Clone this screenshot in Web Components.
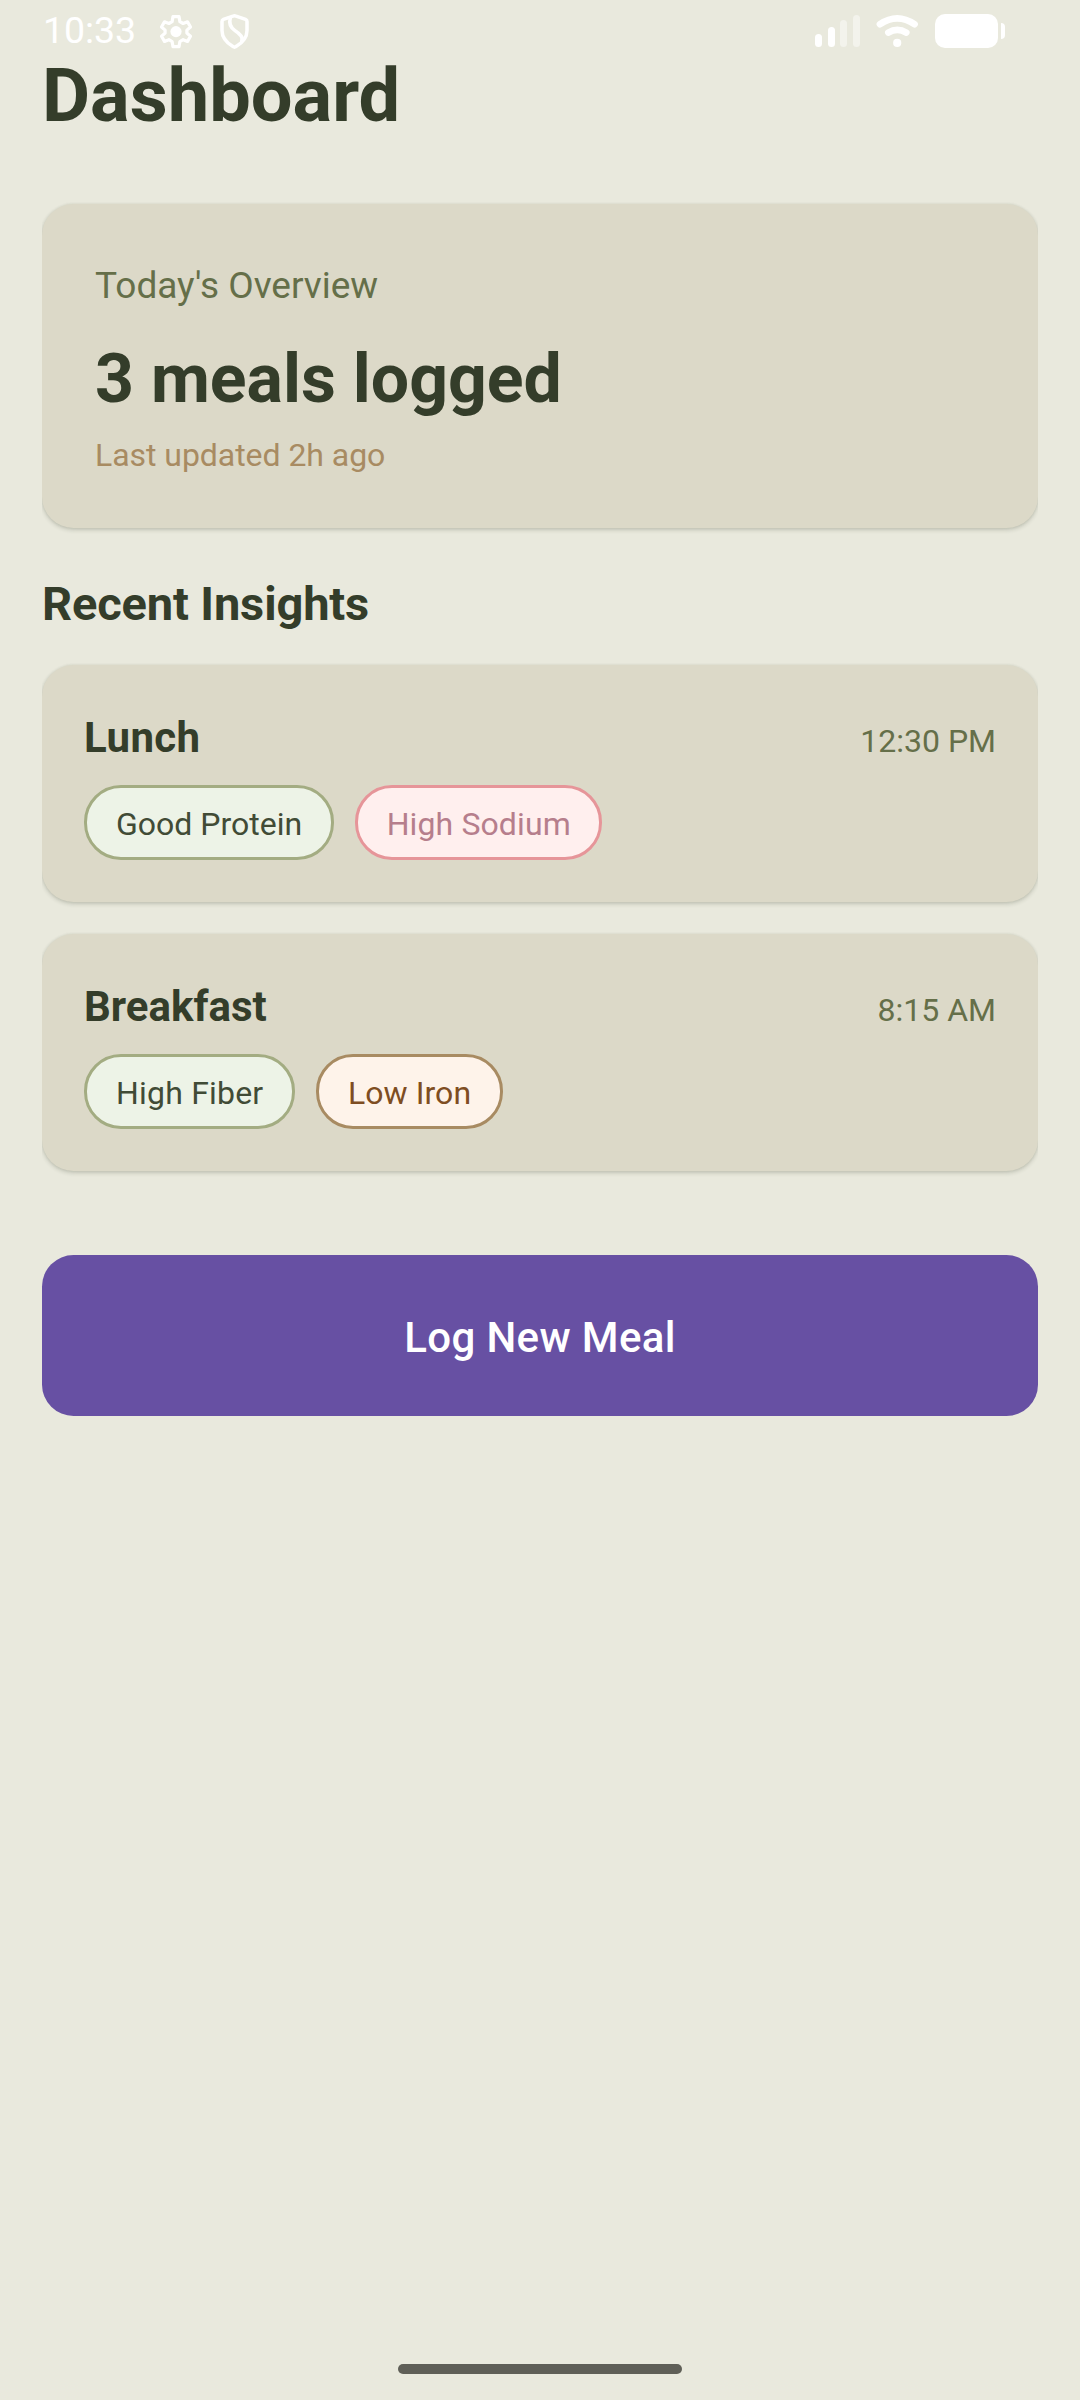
<!DOCTYPE html>
<html lang="en">
<head>
<meta charset="utf-8">
<title>Dashboard</title>
<style>
  html, body { margin: 0; background: #e9e9dd; }
  body { font-family: Roboto, sans-serif; color: #343d2a; height: 2400px; overflow: hidden; }
</style>
</head>
<body>
<meal-dashboard></meal-dashboard>
<script>
const define = (name, html) => {
  const t = document.createElement('template');
  t.innerHTML = html;
  customElements.define(name, class extends HTMLElement {
    constructor() {
      super();
      this.attachShadow({ mode: 'open' }).append(t.content.cloneNode(true));
    }
  });
};

define('status-bar', `
<style>
  :host { display: flex; position: absolute; top: 0; left: 0; width: 1080px; height: 62px; box-sizing: border-box; color: #fff; justify-content: space-between; padding: 8px 74px 0 43px; }
  .side { display: flex; align-items: flex-start; }
  .time { font-size: 37.5px; line-height: 44px; width: 94px; white-space: nowrap; letter-spacing: -.1px; }
  svg { display: block; }
  .gear { margin: 6px 0 0 22px; }
  .shield { margin: 5px 0 0 26px; }
  .signal { margin-top: 6px; }
  .wifi { margin: 6px 0 0 15px; }
  .battery { margin: 6px 0 0 15px; }
</style>
<div class="side">
  <span class="time">10:33</span>
  <svg class="gear" width="34" height="35" viewBox="0 0 34 35" fill="none" stroke="#fff" stroke-width="3.2" stroke-linejoin="round">
    <path d="M14 2.600h6l.9 5 3.200 1.900 4.400-1.700 3 5.200-3.600 3.100v3l3.600 3.100-3 5.200-4.400-1.700-3.200 1.900-.9 5h-6l-.9-5-3.200-1.900-4.400 1.700-3-5.200 3.600-3.100v-3l-3.600-3.100 3-5.200 4.400 1.700 3.200-1.900z"/>
    <circle cx="17" cy="17.6" r="5.6" fill="#fff" stroke="none"/>
  </svg>
  <svg class="shield" width="31" height="37" viewBox="0 0 31 37" fill="none" stroke="#fff" stroke-width="3.5" stroke-linejoin="round" stroke-linecap="round">
    <path d="M14 3.100Q15.500 2.500 17 3.100L26.600 6.400Q28 7 28 8.500V17.500C28 25 23 30 17 33.600Q15.500 34.600 14 33.600C8 30 3 25 3 17.500V8.500Q3 7 4.400 6.400Z"/>
    <path d="M11.400 4.800C9.600 10.500 11 14.200 16 17.600C21.500 21.200 24.300 24 22.700 28.200"/>
  </svg>
</div>
<div class="side">
  <svg class="signal" width="46" height="34" viewBox="0 0 46 34" fill="#fff">
    <rect x="0" y="20" width="7" height="13" rx="3.5"/>
    <rect x="13" y="13" width="7" height="20" rx="3.5"/>
    <rect x="25" y="6" width="7" height="27" rx="3.5" opacity=".45"/>
    <rect x="38" y="1" width="7" height="32" rx="3.5" opacity=".45"/>
  </svg>
  <svg class="wifi" width="44" height="34" viewBox="0 0 44 34" fill="none" stroke="#fff" stroke-width="6.6" stroke-linecap="round">
    <path d="M3.900 10.200Q21.200 -1.600 38.600 10.200"/>
    <path d="M12.300 18.600Q21.300 13.200 30.300 18.600"/>
    <circle cx="21.200" cy="28.900" r="4.100" fill="#fff" stroke="none"/>
  </svg>
  <svg class="battery" width="71" height="34" viewBox="0 0 71 34" fill="#fff">
    <rect x="0" y="0" width="63" height="34" rx="10"/>
    <path d="M66 9a4 4 0 0 1 4 4v8a4 4 0 0 1-4 4z"/>
  </svg>
</div>`);

define('surface-card', `
<style>
  :host { display: block; box-sizing: border-box; background: #dcd9c8; border-radius: 31.5px; box-shadow: 0 2px 4px rgba(40,50,30,.2), 0 0 3px rgba(40,50,30,.07); clip-path: inset(-12px 0); }
</style>
<slot></slot>`);

define('overview-panel', `
<style>
  :host { display: block; }
  surface-card { height: 324px; padding: 60px 53px 0; }
  .label { font-size: 37px; line-height: 43px; color: #656f49; }
  .value { font-size: 68px; line-height: 80px; font-weight: 700; margin-top: 32px; }
  .note { font-size: 32px; line-height: 37px; color: #a88b62; margin-top: 18px; letter-spacing: -.05px; }
</style>
<surface-card>
  <div class="label"><slot name="label"></slot></div>
  <div class="value"><slot name="value"></slot></div>
  <div class="note"><slot name="note"></slot></div>
</surface-card>`);

define('insight-chip', `
<style>
  :host { display: block; box-sizing: border-box; height: 75px; padding: 18px 28.5px 0 29px; border: 3px solid #a3ac82; border-radius: 37px; background: #edf3e7; color: #414b36; font-size: 32px; line-height: 37px; white-space: nowrap; letter-spacing: 0; }
  :host([tone="alert"]) { border-color: #e69599; background: #ffefee; color: #b67e8c; letter-spacing: .12px; }
  :host([tone="warn"]) { border-color: #a88b62; background: #fef3ea; color: #7e4d22; letter-spacing: .08px; }
  :host([compact]) { letter-spacing: .2px; }
</style>
<slot></slot>`);

define('meal-insight', `
<style>
  :host { display: block; }
  surface-card { height: 237px; padding: 48px 42px 0; }
  .head { display: flex; justify-content: space-between; align-items: baseline; height: 49px; }
  .name { font-size: 42px; line-height: 49px; font-weight: 700; }
  .time { font-size: 32px; line-height: 37px; color: #656f49; }
  .chips { display: flex; gap: 21px; margin-top: 23px; }
</style>
<surface-card>
  <div class="head"><span class="name"><slot name="name"></slot></span><span class="time"><slot name="time"></slot></span></div>
  <div class="chips"><slot></slot></div>
</surface-card>`);

define('primary-button', `
<style>
  :host { display: block; }
  button { display: flex; align-items: center; justify-content: center; width: 100%; height: 161px; border: 0; border-radius: 31.5px; background: #6750a3; color: #fff; font: 500 42px/49px Roboto, sans-serif; padding: 4px 0 0; letter-spacing: .37px; }
</style>
<button><slot></slot></button>`);

define('meal-dashboard', `
<style>
  :host { display: flex; flex-direction: column; box-sizing: border-box; height: 2400px; padding: 53px 42px 26px; }
  h1 { margin: 0; font-size: 74px; line-height: 86px; font-weight: 700; }
  h2 { margin: 48px 0 33.5px; font-size: 47px; line-height: 55px; font-weight: 700; letter-spacing: -.14px; }
  overview-panel { margin-top: 65px; }
  .list { display: flex; flex-direction: column; gap: 32px; }
  .short { letter-spacing: .35px; }
  primary-button { margin-top: 84.5px; }
  .handle { width: 284px; height: 10px; border-radius: 5px; background: #5f5f57; margin: auto auto 0; }
</style>
<status-bar></status-bar>
<h1>Dashboard</h1>
<overview-panel>
  <span slot="label">Today's Overview</span>
  <span slot="value">3 meals logged</span>
  <span slot="note">Last updated 2h ago</span>
</overview-panel>
<h2>Recent Insights</h2>
<div class="list">
  <meal-insight>
    <span slot="name" class="short">Lunch</span><span slot="time">12:30 PM</span>
    <insight-chip>Good Protein</insight-chip>
    <insight-chip tone="alert">High Sodium</insight-chip>
  </meal-insight>
  <meal-insight>
    <span slot="name">Breakfast</span><span slot="time">8:15 AM</span>
    <insight-chip compact>High Fiber</insight-chip>
    <insight-chip tone="warn">Low Iron</insight-chip>
  </meal-insight>
</div>
<primary-button>Log New Meal</primary-button>
<div class="handle"></div>`);
</script>
</body>
</html>
